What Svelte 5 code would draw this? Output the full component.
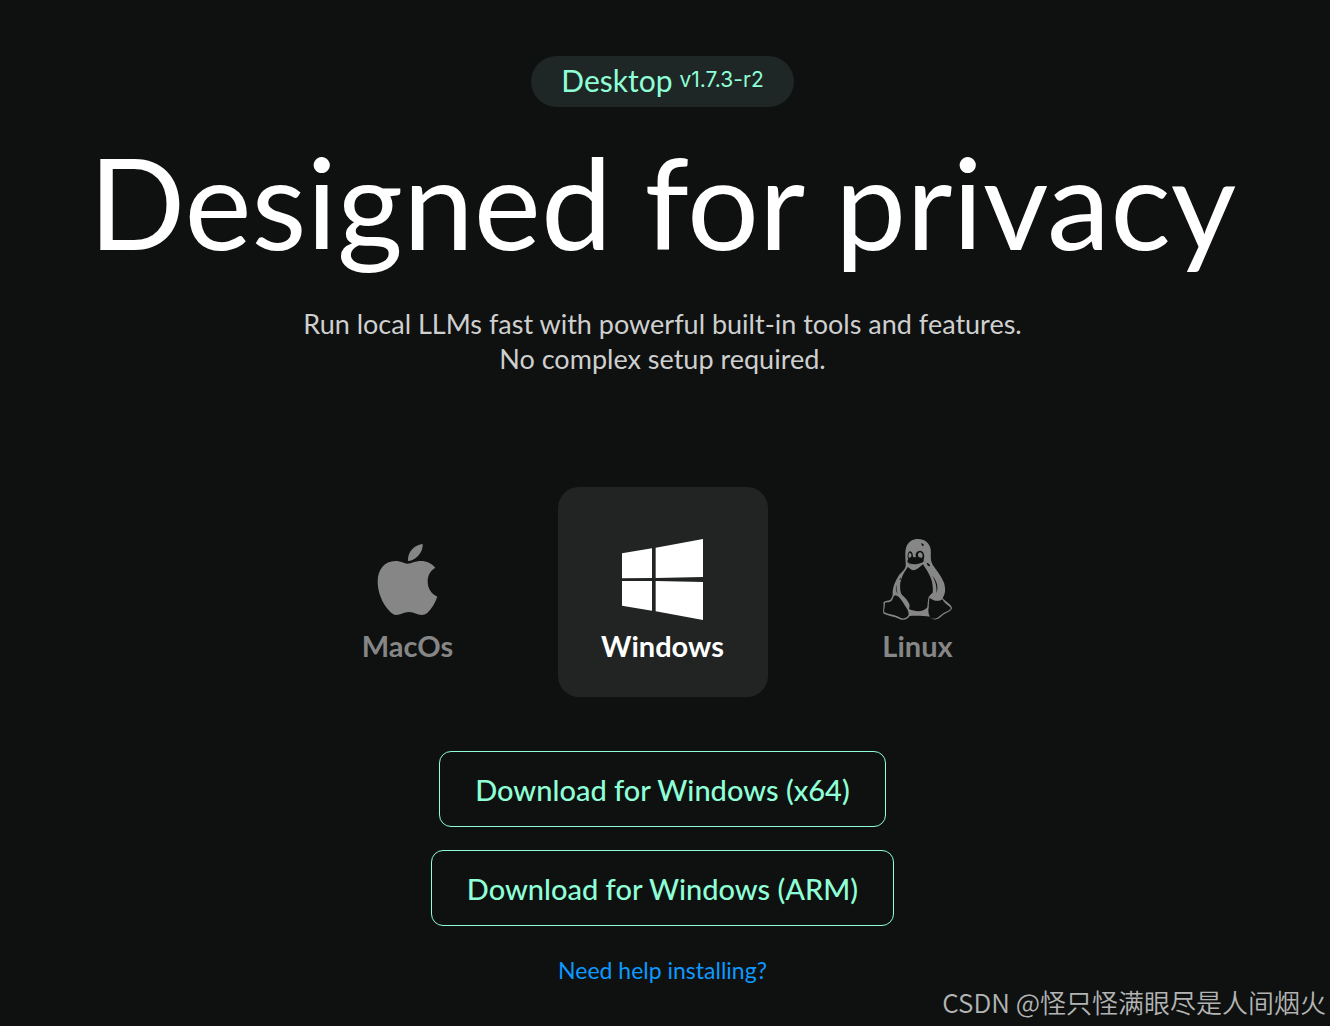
<script lang="ts">
  // Desktop download page: pick a platform, get its installers

  type Platform = 'mac' | 'windows' | 'linux';

  const platforms: { id: Platform; label: string }[] = [
    { id: 'mac', label: 'MacOs' },
    { id: 'windows', label: 'Windows' },
    { id: 'linux', label: 'Linux' },
  ];

  const downloads: Record<Platform, string[]> = {
    mac: ['Download for Mac'],
    windows: ['Download for Windows (x64)', 'Download for Windows (ARM)'],
    linux: ['Download for Linux'],
  };

  let selected: Platform = $state('windows');
</script>

<main class="page">
  <div class="version">
    <span class="name">Desktop</span>
    <span class="number">v1.7.3-r2</span>
  </div>

  <h1>Designed for privacy</h1>

  <p class="intro">
    Run local LLMs fast with powerful built-in tools and features.<br />
    No complex setup required.
  </p>

  <div class="platforms">
    {#each platforms as platform (platform.id)}
      <button
        class="platform"
        class:active={selected === platform.id}
        aria-pressed={selected === platform.id}
        onclick={() => (selected = platform.id)}
      >
        {#if platform.id === 'mac'}
          <svg viewBox="81 57 243 243" fill="currentColor" aria-hidden="true">
            <path d="M248 72C249 88 241 102 230 112C222 119 213 123 204 123C203 108 208 95 218 86C227 78 237 73 248 72Z" />
            <path d="M203 131C214 131 225 123 243 123C260 123 275 130 286 143C271 152 263 166 263 184C263 206 275 223 292 230C285 250 274 267 262 279C257 283 251 285 245 285C231 285 223 276 207 276C190 276 183 285 168 285C161 285 155 280 149 274C127 251 113 216 113 185C113 149 134 123 166 123C183 123 192 131 203 131Z" />
          </svg>
        {:else if platform.id === 'windows'}
          <svg viewBox="0 0 243 243" fill="currentColor" aria-hidden="true">
            <path d="M0 43L90 28V117L0 118Z" />
            <path d="M101 26L243 0V114L101 117Z" />
            <path d="M0 126H90V215L0 200Z" />
            <path d="M101 126L243 129V243L101 217Z" />
          </svg>
        {:else}
          <svg viewBox="21 27 243 243" fill="currentColor" aria-hidden="true">
            <path
              fill-rule="evenodd"
              d="M144 27C164 27 179 38 182 58C184 77 179 88 188 104C198 119 214 137 222 158C227 174 227 190 218 204C227 216 246 224 246 235C243 246 225 248 213 260C204 269 188 273 180 260C160 257 136 257 119 258C113 269 99 273 87 266C73 259 53 257 41 251C36 242 43 231 40 219C41 211 53 214 61 209C64 205 66 202 68 195C66 175 77 150 89 133C99 121 109 116 107 100C106 80 104 62 110 48C116 35 128 27 144 27ZM114 110C106 122 97 134 94 148C88 163 90 182 94 192C104 203 119 216 119 228L117 237C137 246 160 247 172 232C173 223 173 213 176 201C181 193 185 191 188 188C190 167 186 149 178 134C171 120 164 112 159 103C148 113 138 121 130 121C122 118 118 115 114 110ZM76 196C68 199 70 207 65 212C57 219 46 215 44 219C47 231 40 239 43 247C58 254 78 255 91 263C101 268 111 264 115 256C118 247 113 239 107 230C97 215 88 197 76 196ZM179 203C175 216 178 229 175 240C175 255 181 267 191 266C207 266 211 252 227 246C239 241 245 237 241 232C233 224 222 219 217 208C206 216 189 213 179 203ZM119 64C111 69 112 84 115 87C112 90 111 95 114 99C118 105 126 108 133 107C145 106 157 102 161 94L161 88C165 77 162 63 150 62C138 63 135 74 138 82L129 81C129 72 126 64 119 64ZM153 40C160 40 164 45 159 48C155 49 156 44 153 40ZM170 98C177 99 181 105 180 109C173 108 171 104 170 98ZM187 137C201 153 206 171 199 190C201 170 197 153 187 137ZM91 143L94 148L88 150ZM80 164C76 175 77 184 84 192C79 183 79 174 80 164Z"
            />
            <path d="M119 68C125 70 126 77 123 81L117 84C114 78 115 70 119 68ZM150 67C157 68 160 76 156 84L146 81C142 76 144 68 150 67Z" />
            <path d="M114 97C122 106 143 104 160 96L157 101C142 110 125 112 114 100Z" />
          </svg>
        {/if}
        <span>{platform.label}</span>
      </button>
    {/each}
  </div>

  <div class="downloads">
    {#each downloads[selected] as label (label)}
      <button class="download">{label}</button>
    {/each}
  </div>

  <a class="help" href="#install">Need help installing?</a>

  <div class="watermark">CSDN @怪只怪满眼尽是人间烟火</div>
</main>

<style>
  :global(body) {
    background: #0e1110;
  }

  .page {
    --accent: #8effd6;
    position: relative;
    box-sizing: border-box;
    min-height: 100vh;
    padding: 56px 5px 40px 0;
    display: flex;
    flex-direction: column;
    align-items: center;
    background: #0e1110;
    color: #fff;
    font-family: Lato, 'Liberation Sans', sans-serif;
    text-align: center;
  }

  button {
    font-family: inherit;
    cursor: pointer;
  }

  .version {
    display: flex;
    align-items: center;
    gap: 7px;
    padding: 6px 30px 9px;
    border-radius: 26px;
    background: #1e2725;
    color: var(--accent);
    line-height: 36px;
  }

  .name {
    font-size: 30px;
  }

  .number {
    font-family: Inter, sans-serif;
    font-size: 21px;
  }

  h1 {
    margin: 19px 0 0;
    font-size: 127px;
    font-weight: 400;
    line-height: 150px;
  }

  .intro {
    margin: 30px 0 0;
    color: #cfcfcf;
    font-size: 27px;
    line-height: 35px;
  }

  .platforms {
    display: flex;
    gap: 45px;
    margin-top: 111px;
  }

  .platform {
    display: flex;
    flex-direction: column;
    align-items: center;
    gap: 8px;
    width: 210px;
    height: 210px;
    padding: 52px 0 0;
    border: 0;
    border-radius: 21px;
    background: transparent;
    color: #868686;
    font-size: 29px;
    font-weight: 700;
    line-height: 36px;
  }

  .platform.active {
    background: #222423;
    color: #fff;
  }

  .platform svg {
    width: 81px;
    height: 81px;
  }

  .downloads {
    display: flex;
    flex-direction: column;
    align-items: center;
    gap: 23px;
    margin-top: 54px;
  }

  .download {
    height: 76px;
    padding: 2px 35px 0;
    border: 1px solid var(--accent);
    border-radius: 12px;
    background: transparent;
    color: var(--accent);
    font-size: 29px;
    font-weight: 500;
    line-height: 36px;
  }

  .help {
    margin-top: 30px;
    color: #0d99ff;
    font-size: 23px;
    line-height: 28px;
    text-decoration: none;
  }

  .watermark {
    position: absolute;
    right: 4px;
    bottom: 5px;
    color: #b3b4b3;
    font-family: 'Noto Sans CJK SC', sans-serif;
    font-size: 26px;
    font-weight: 350;
    line-height: 38px;
  }
</style>
